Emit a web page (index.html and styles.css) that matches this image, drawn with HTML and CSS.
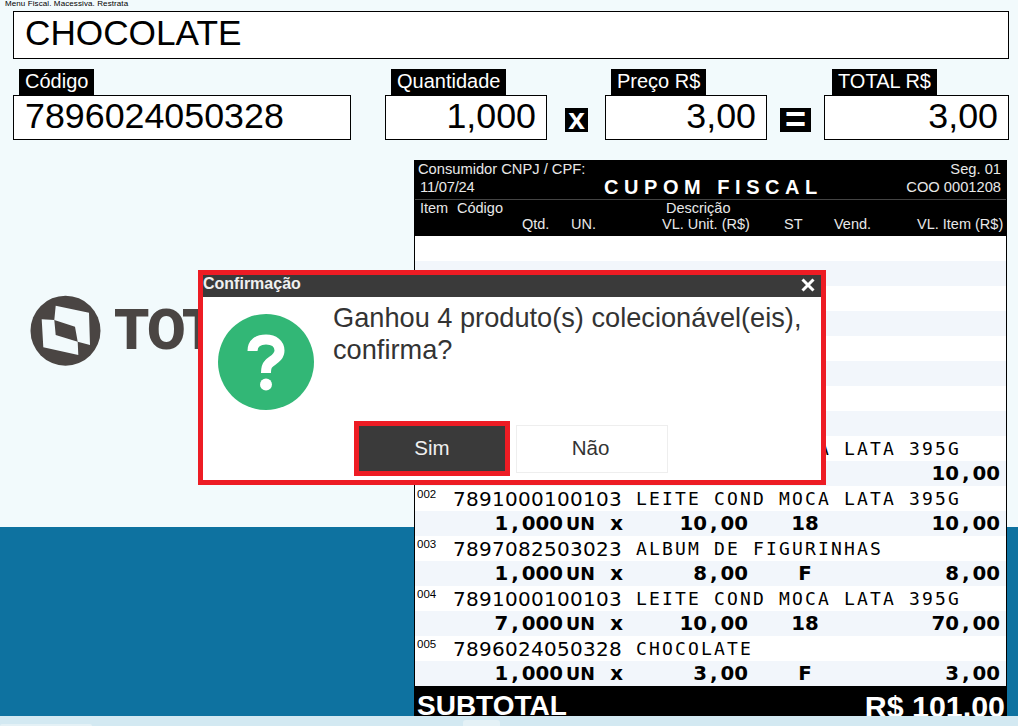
FILE: index.html
```html
<!DOCTYPE html>
<html lang="en">
<head>
    <meta charset="UTF-8">
    <title>Frente de Caixa</title>
    <link rel="stylesheet" href="styles.css">
</head>
<body>
    <div class="screen">
        <div class="top-area">
            <div class="tiny-menu">Menu Fiscal. Macessiva. Restrata</div>
            <div class="product-name">CHOCOLATE</div>

            <div class="fields">
                <div class="field field-code">
                    <div class="field-label">Código</div>
                    <div class="field-box">7896024050328</div>
                </div>
                <div class="field field-qty">
                    <div class="field-label">Quantidade</div>
                    <div class="field-box field-right">1,000</div>
                </div>
                <div class="op op-times">x</div>
                <div class="field field-price">
                    <div class="field-label">Preço R$</div>
                    <div class="field-box field-right">3,00</div>
                </div>
                <div class="op op-equals">=</div>
                <div class="field field-total">
                    <div class="field-label">TOTAL R$</div>
                    <div class="field-box field-right">3,00</div>
                </div>
            </div>

            <div class="brand">
                <svg class="brand-mark" viewBox="0 0 80 80" aria-hidden="true">
                    <circle cx="40.5" cy="40.7" r="35" fill="#4a4543"/>
                    <path fill="#f2fafc" d="M30.7 15.7 64 22.7 65 55 52.7 51.7 50 36.7 29.3 30Z"/>
                    <path fill="#f2fafc" d="M16.7 29.3 29.3 30 30.7 45 52.7 51.7 53.3 65 18.3 57.3Z"/>
                </svg>
                <span class="brand-name">TOTVS</span>
            </div>
        </div>
        <div class="band"></div>
        <div class="strip">
            <div class="strip-tab strip-tab-left"></div>
            <div class="strip-tab strip-tab-mid"></div>
        </div>

        <div class="receipt">
            <div class="receipt-head">
                <div class="head-line">
                    <span>Consumidor CNPJ / CPF:</span>
                    <span>Seg. 01</span>
                </div>
                <div class="head-line head-line-second">
                    <span class="head-date">11/07/24</span>
                    <span class="head-title">CUPOM FISCAL</span>
                    <span class="head-coo">COO 0001208</span>
                </div>
                <div class="head-cols head-cols-first">
                    <span class="col-item">Item</span>
                    <span class="col-code">Código</span>
                    <span>Descrição</span>
                </div>
                <div class="head-cols head-cols-second">
                    <span class="col-qtd">Qtd.</span>
                    <span class="col-un">UN.</span>
                    <span class="col-unit">VL. Unit. (R$)</span>
                    <span class="col-st">ST</span>
                    <span class="col-vend">Vend.</span>
                    <span>VL. Item (R$)</span>
                </div>
            </div>

            <div class="rows">
                <div class="row"></div>
                <div class="row"></div>
                <div class="row"></div>
                <div class="row"></div>
                <div class="row"></div>
                <div class="row"></div>
                <div class="row"></div>
                <div class="row"></div>

                <div class="row row-desc"><span class="seq">001</span><span class="ean">7891000100103</span><span class="desc">LEITE COND MOCA LATA 395G</span></div>
                <div class="row row-vals"><span class="qty">1<i>,</i>000</span><span class="un">UN</span><span class="times">x</span><span class="unit">10<i>,</i>00</span><span class="st">18</span><span class="total">10<i>,</i>00</span></div>

                <div class="row row-desc"><span class="seq">002</span><span class="ean">7891000100103</span><span class="desc">LEITE COND MOCA LATA 395G</span></div>
                <div class="row row-vals"><span class="qty">1<i>,</i>000</span><span class="un">UN</span><span class="times">x</span><span class="unit">10<i>,</i>00</span><span class="st">18</span><span class="total">10<i>,</i>00</span></div>

                <div class="row row-desc"><span class="seq">003</span><span class="ean">7897082503023</span><span class="desc">ALBUM DE FIGURINHAS</span></div>
                <div class="row row-vals"><span class="qty">1<i>,</i>000</span><span class="un">UN</span><span class="times">x</span><span class="unit">8<i>,</i>00</span><span class="st">F</span><span class="total">8<i>,</i>00</span></div>

                <div class="row row-desc"><span class="seq">004</span><span class="ean">7891000100103</span><span class="desc">LEITE COND MOCA LATA 395G</span></div>
                <div class="row row-vals"><span class="qty">7<i>,</i>000</span><span class="un">UN</span><span class="times">x</span><span class="unit">10<i>,</i>00</span><span class="st">18</span><span class="total">70<i>,</i>00</span></div>

                <div class="row row-desc"><span class="seq">005</span><span class="ean">7896024050328</span><span class="desc">CHOCOLATE</span></div>
                <div class="row row-vals"><span class="qty">1<i>,</i>000</span><span class="un">UN</span><span class="times">x</span><span class="unit">3<i>,</i>00</span><span class="st">F</span><span class="total">3<i>,</i>00</span></div>
            </div>

            <div class="subtotal">
                <span>SUBTOTAL</span>
                <span class="subtotal-value">R$ 101,00</span>
            </div>
        </div>

        <div class="modal">
            <div class="modal-title">
                <span>Confirmação</span>
                <svg class="modal-close" viewBox="0 0 14 14" aria-hidden="true">
                    <path d="M1.5 1.5 12.5 12.5M12.5 1.5 1.5 12.5" stroke="#fff" stroke-width="3" fill="none"/>
                </svg>
            </div>
            <div class="modal-body">
                <div class="modal-content">
                    <svg class="modal-icon" viewBox="0 0 96 96" aria-hidden="true">
                        <circle cx="48" cy="48" r="48" fill="#32b776"/>
                        <path d="M34.5 37C34.5 29 40 25.5 48 25.5 56 25.5 61.5 30 61.5 36.5 61.5 44 54 46 50.5 50 48.5 52 48 54 48 59" stroke="#fff" stroke-width="10" fill="none"/>
                        <circle cx="48" cy="70.5" r="6" fill="#fff"/>
                    </svg>
                    <p class="modal-text">Ganhou 4 produto(s) colecionável(eis), confirma?</p>
                </div>
                <div class="modal-buttons">
                    <button class="btn btn-yes">Sim</button>
                    <button class="btn btn-no">Não</button>
                </div>
            </div>
        </div>
    </div>
</body>
</html>
```

FILE: styles.css
```css
* {
    margin: 0;
    padding: 0;
    box-sizing: border-box;
}

body {
    font-family: "Liberation Sans", Arial, sans-serif;
    background-color: #f2fafc;
    color: #000;
}

.screen {
    position: relative;
    width: 1018px;
    height: 726px;
    overflow: hidden;
    display: flex;
    flex-direction: column;
}

.top-area {
    height: 527px;
    padding-left: 13px;
}

.tiny-menu {
    height: 11px;
    margin-left: -8px;
    font-size: 8px;
    line-height: 8px;
    letter-spacing: 0.1px;
}

.product-name {
    width: 996px;
    height: 48px;
    padding-left: 11px;
    background-color: #fff;
    border: 1px solid #000;
    font-size: 35.2px;
    line-height: 41px;
}

/* campos de codigo, quantidade, preco e total */
.fields {
    display: flex;
    align-items: flex-end;
    margin-top: 10px;
}

.field-label {
    display: inline-block;
    height: 26px;
    padding: 0 6px;
    margin-left: 6px;
    background-color: #000;
    color: #fff;
    font-size: 20px;
    line-height: 25px;
    vertical-align: bottom;
}

.field-box {
    height: 45px;
    padding: 0 10px 0 11px;
    background-color: #fff;
    border: 1px solid #000;
    font-size: 35.8px;
    line-height: 41px;
}

.field-right {
    text-align: right;
}

.field-code { width: 338px; }
.field-qty { width: 162px; margin-left: 34px; }
.field-price { width: 162px; margin-left: 17px; }
.field-total { width: 185px; margin-left: 13px; }
.field-total .field-label { margin-left: 8px; }

.op {
    height: 24px;
    margin-bottom: 8px;
    background-color: #000;
    color: #fff;
    font-weight: bold;
    text-align: center;
}

.op-times {
    width: 23px;
    margin-left: 18px;
    font-size: 30px;
    line-height: 22px;
}

.op-equals {
    width: 31px;
    margin-left: 13px;
    font-size: 36px;
    line-height: 24px;
}

.brand {
    display: flex;
    align-items: center;
    margin-top: 150px;
    margin-left: 12px;
    color: #4a4543;
}

.brand-mark {
    width: 80px;
    height: 80px;
}

.brand-name {
    margin-left: 9px;
    font-family: Roboto, sans-serif;
    font-weight: 900;
    font-size: 56px;
    letter-spacing: -1.5px;
}

.band {
    height: 189px;
    background-color: #0e72a0;
}

.strip {
    position: relative;
    height: 10px;
    background-color: #d3e9f2;
}

.strip-tab {
    position: absolute;
    background-color: #e4f1f6;
    border-radius: 3px 3px 0 0;
}

.strip-tab-left {
    left: 0;
    bottom: 0;
    width: 92px;
    height: 2px;
}

.strip-tab-mid {
    left: 463px;
    bottom: 0;
    width: 37px;
    height: 6px;
}

/* cupom fiscal */
.receipt {
    position: absolute;
    left: 414px;
    top: 160px;
    width: 593px;
    height: 556px;
    overflow: hidden;
    background-color: #fff;
    border-left: 1px solid #000;
    border-right: 1px solid #000;
}

.receipt-head {
    height: 76px;
    background-color: #000;
    color: #e8e8e8;
    font-size: 14.7px;
    white-space: nowrap;
}

.head-line {
    display: flex;
    justify-content: space-between;
    padding: 0 5px 0 3px;
    height: 18px;
    line-height: 18px;
}

.head-line-second {
    justify-content: flex-start;
    height: 22px;
    padding-left: 5px;
    padding-bottom: 3px;
    border-bottom: 1px solid #444;
    align-items: center;
}

.head-date {
    width: 184px;
    letter-spacing: -0.2px;
}

.head-title {
    color: #fff;
    font-size: 20px;
    font-weight: bold;
    letter-spacing: 5.55px;
}

.head-coo {
    margin-left: auto;
}

.head-cols {
    display: flex;
    height: 16px;
    line-height: 16px;
    font-size: 14.5px;
}

.head-cols-first {
    padding-left: 5px;
}

.head-cols-second {
    padding-left: 107px;
}

.col-item { width: 37px; }
.col-code { width: 209px; }
.col-qtd { width: 49px; }
.col-un { width: 91px; }
.col-unit { width: 122px; }
.col-st { width: 50px; }
.col-vend { width: 83px; }

.row {
    display: flex;
    align-items: center;
    height: 25px;
    background-color: #fff;
}

.row:nth-child(even) {
    background-color: #f2f6fb;
}

.row-desc {
    white-space: pre;
}

.seq {
    width: 38px;
    padding-left: 2px;
    align-self: flex-start;
    font-size: 11.5px;
    line-height: 16px;
}

.ean {
    width: 183px;
    font-family: "DejaVu Sans", sans-serif;
    font-size: 20px;
    letter-spacing: 0.28px;
}

.desc {
    font-family: "DejaVu Sans Mono", monospace;
    font-size: 18px;
    letter-spacing: 2.16px;
}

.row-vals {
    font-family: "DejaVu Sans", sans-serif;
    font-weight: bold;
    font-size: 19.8px;
    padding-right: 6px;
}

/* virgula ocupa uma casa inteira, como na fonte monoespacada */
.row-vals i {
    font-style: normal;
    padding: 0 3px;
}

.qty, .unit, .total, .times {
    text-align: right;
}

.qty { width: 148px; }
.un { width: 31px; font-size: 17.5px; padding-left: 3px; }
.times { width: 29px; }
.unit { width: 125px; }
.st { width: 114px; text-align: center; }
.total { width: 138px; }

.subtotal {
    display: flex;
    justify-content: space-between;
    height: 30px;
    padding: 0 1px 0 2px;
    background-color: #000;
    color: #fff;
    font-size: 28px;
    font-weight: bold;
    line-height: 40px;
}

.subtotal-value {
    font-size: 30.4px;
}

/* janela de confirmacao */
.modal {
    position: absolute;
    left: 198px;
    top: 270px;
    width: 628px;
    height: 215px;
    display: flex;
    flex-direction: column;
    background-color: #fff;
    border: 5px solid #ed1c24;
}

.modal-title {
    display: flex;
    justify-content: space-between;
    height: 22px;
    padding: 0 6px 0 0;
    background-color: #3a3a3a;
    color: #f0f0f0;
    font-size: 16px;
    font-weight: bold;
    line-height: 17px;
}

.modal-close {
    width: 14px;
    height: 14px;
    margin-top: 3px;
}

.modal-body {
    flex: 1;
    display: flex;
    flex-direction: column;
    justify-content: space-between;
    padding: 5px 0 4px 15px;
}

.modal-content {
    display: flex;
    align-items: flex-start;
}

.modal-icon {
    width: 96px;
    height: 96px;
    margin-top: 12px;
    flex-shrink: 0;
}

.modal-text {
    width: 490px;
    margin-left: 19px;
    color: #333;
    font-size: 27.2px;
    line-height: 32px;
}

.modal-buttons {
    display: flex;
    align-items: center;
    gap: 6px;
    margin-left: 136px;
}

.btn {
    padding-bottom: 2px;
    font-family: "Liberation Sans", Arial, sans-serif;
    font-size: 20.5px;
}

.btn-yes {
    width: 156px;
    height: 55px;
    background-color: #3a3a3a;
    border: 5px solid #ed1c24;
    color: #f0f0f0;
}

.btn-no {
    width: 152px;
    height: 48px;
    padding-right: 3px;
    background-color: #fff;
    border: 1px solid #eee;
    color: #333;
}
```
